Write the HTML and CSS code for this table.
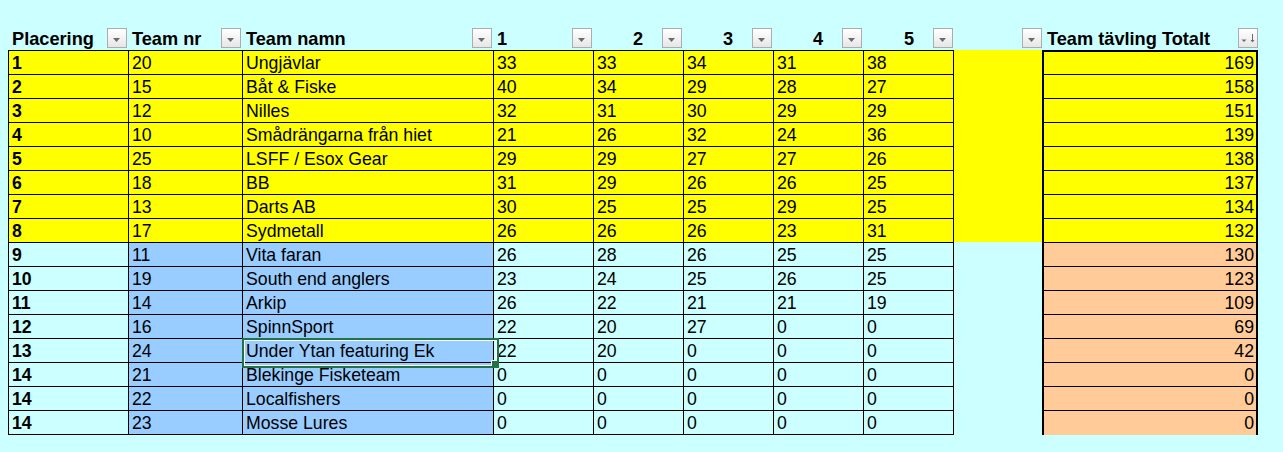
FILE: index.html
```html
<!DOCTYPE html>
<html lang="sv">
<head>
<meta charset="utf-8">
<title>Team tävling</title>
<link rel="stylesheet" href="styles.css">
</head>
<body>
<div class="sheet">
  <div class="row hdr">
    <div class="h"><span>Placering</span><span class="fb"><svg width="18" height="18"><path d="M5 9h7l-3.5 4z"/></svg></span></div>
    <div class="h"><span>Team nr</span><span class="fb"><svg width="18" height="18"><path d="M5 9h7l-3.5 4z"/></svg></span></div>
    <div class="h"><span>Team namn</span><span class="fb"><svg width="18" height="18"><path d="M5 9h7l-3.5 4z"/></svg></span></div>
    <div class="h"><span>1</span><span class="fb"><svg width="18" height="18"><path d="M5 9h7l-3.5 4z"/></svg></span></div>
    <div class="h hn"><span>2</span><span class="fb"><svg width="18" height="18"><path d="M5 9h7l-3.5 4z"/></svg></span></div>
    <div class="h hn"><span>3</span><span class="fb"><svg width="18" height="18"><path d="M5 9h7l-3.5 4z"/></svg></span></div>
    <div class="h hn"><span>4</span><span class="fb"><svg width="18" height="18"><path d="M5 9h7l-3.5 4z"/></svg></span></div>
    <div class="h hn h8"><span>5</span><span class="fb"><svg width="18" height="18"><path d="M5 9h7l-3.5 4z"/></svg></span></div>
    <div class="h hg"><span class="fb"><svg width="18" height="18"><path d="M5 9h7l-3.5 4z"/></svg></span></div>
    <div class="h ht"><span>Team tävling Totalt</span><span class="fb"><svg width="18" height="18"><path d="M2.5 10.5h5l-2.5 2.5z"/><rect x="13" y="5" width="1" height="7"/><path d="M11.5 11h4l-2 2.5z"/></svg></span></div>
  </div>

  <div class="row y first"><div class="c pl">1</div><div class="c">20</div><div class="c">Ungjävlar</div><div class="c">33</div><div class="c">33</div><div class="c">34</div><div class="c">31</div><div class="c c8">38</div><div class="gap"></div><div class="tot">169</div></div>
  <div class="row y"><div class="c pl">2</div><div class="c">15</div><div class="c">Båt &amp; Fiske</div><div class="c">40</div><div class="c">34</div><div class="c">29</div><div class="c">28</div><div class="c c8">27</div><div class="gap"></div><div class="tot">158</div></div>
  <div class="row y"><div class="c pl">3</div><div class="c">12</div><div class="c">Nilles</div><div class="c">32</div><div class="c">31</div><div class="c">30</div><div class="c">29</div><div class="c c8">29</div><div class="gap"></div><div class="tot">151</div></div>
  <div class="row y"><div class="c pl">4</div><div class="c">10</div><div class="c">Smådrängarna från hiet</div><div class="c">21</div><div class="c">26</div><div class="c">32</div><div class="c">24</div><div class="c c8">36</div><div class="gap"></div><div class="tot">139</div></div>
  <div class="row y"><div class="c pl">5</div><div class="c">25</div><div class="c">LSFF / Esox Gear</div><div class="c">29</div><div class="c">29</div><div class="c">27</div><div class="c">27</div><div class="c c8">26</div><div class="gap"></div><div class="tot">138</div></div>
  <div class="row y"><div class="c pl">6</div><div class="c">18</div><div class="c">BB</div><div class="c">31</div><div class="c">29</div><div class="c">26</div><div class="c">26</div><div class="c c8">25</div><div class="gap"></div><div class="tot">137</div></div>
  <div class="row y"><div class="c pl">7</div><div class="c">13</div><div class="c">Darts AB</div><div class="c">30</div><div class="c">25</div><div class="c">25</div><div class="c">29</div><div class="c c8">25</div><div class="gap"></div><div class="tot">134</div></div>
  <div class="row y"><div class="c pl">8</div><div class="c">17</div><div class="c">Sydmetall</div><div class="c">26</div><div class="c">26</div><div class="c">26</div><div class="c">23</div><div class="c c8">31</div><div class="gap"></div><div class="tot">132</div></div>

  <div class="row"><div class="c pl">9</div><div class="c b">11</div><div class="c b">Vita faran</div><div class="c">26</div><div class="c">28</div><div class="c">26</div><div class="c">25</div><div class="c c8">25</div><div class="gap"></div><div class="tot p">130</div></div>
  <div class="row"><div class="c pl">10</div><div class="c b">19</div><div class="c b">South end anglers</div><div class="c">23</div><div class="c">24</div><div class="c">25</div><div class="c">26</div><div class="c c8">25</div><div class="gap"></div><div class="tot p">123</div></div>
  <div class="row"><div class="c pl">11</div><div class="c b">14</div><div class="c b">Arkip</div><div class="c">26</div><div class="c">22</div><div class="c">21</div><div class="c">21</div><div class="c c8">19</div><div class="gap"></div><div class="tot p">109</div></div>
  <div class="row"><div class="c pl">12</div><div class="c b">16</div><div class="c b">SpinnSport</div><div class="c">22</div><div class="c">20</div><div class="c">27</div><div class="c">0</div><div class="c c8">0</div><div class="gap"></div><div class="tot p">69</div></div>
  <div class="row"><div class="c pl">13</div><div class="c b">24</div><div class="c b sel">Under Ytan featuring Ek<span class="handle"></span></div><div class="c">22</div><div class="c">20</div><div class="c">0</div><div class="c">0</div><div class="c c8">0</div><div class="gap"></div><div class="tot p">42</div></div>
  <div class="row"><div class="c pl">14</div><div class="c b">21</div><div class="c b">Blekinge Fisketeam</div><div class="c">0</div><div class="c">0</div><div class="c">0</div><div class="c">0</div><div class="c c8">0</div><div class="gap"></div><div class="tot p">0</div></div>
  <div class="row"><div class="c pl">14</div><div class="c b">22</div><div class="c b">Localfishers</div><div class="c">0</div><div class="c">0</div><div class="c">0</div><div class="c">0</div><div class="c c8">0</div><div class="gap"></div><div class="tot p">0</div></div>
  <div class="row last"><div class="c pl">14</div><div class="c b">23</div><div class="c b">Mosse Lures</div><div class="c">0</div><div class="c">0</div><div class="c">0</div><div class="c">0</div><div class="c c8">0</div><div class="gap"></div><div class="tot p">0</div></div>
</div>
</body>
</html>
```

FILE: styles.css
```css
* { box-sizing: border-box; }

html, body {
  margin: 0;
  background: #ccffff;
}

body {
  padding: 26px 0 0 8px;
  font-family: "Liberation Sans", Arial, sans-serif;
  font-size: 17.7px;
  color: #000;
}

.sheet {
  display: flex;
  flex-direction: column;
  width: 1250px;
}

.row {
  display: grid;
  grid-template-columns: 120px 114px 251px 100px 90px 90px 90px 91px 88px 216px;
  height: 24px;
}

.row.last { height: 25px; }

.y { background: #ffff00; }

/* header */
.h {
  display: flex;
  align-items: center;
  justify-content: space-between;
  border-left: 1px solid transparent;
  padding: 0 1px 0 3px;
  line-height: 24px;
  font-size: 18.2px;
  font-weight: bold;
  white-space: nowrap;
}

.h > span:first-child:not(.fb) { position: relative; top: 1px; }

.hn { justify-content: flex-end; }
.hn span:first-child { margin-right: 19px; }
.hg { justify-content: flex-end; padding-right: 0; border-left: 0; }
.ht { border-left: 2px solid transparent; padding-right: 0; }
.h8 { border-right: 1px solid transparent; padding-right: 0; }

.fb {
  flex: none;
  width: 20px;
  height: 20px;
  border: 1px solid #acacac;
  background: linear-gradient(#ffffff, #f3f3f3 50%, #e6e6e6);
  display: flex;
}

.fb svg { display: block; fill: #6b6b6b; }

/* data cells */
.c {
  border-left: 1px solid #000;
  border-top: 1px solid #000;
  padding: 2px 3px 0;
  line-height: 21px;
  white-space: nowrap;
  overflow: hidden;
}

.c8 { border-right: 1px solid #000; }

.last .c { border-bottom: 1px solid #000; }

.pl { font-weight: bold; }

.b { background: #99ccff; }

.tot {
  border-left: 2px solid #000;
  border-right: 2px solid #000;
  border-top: 1px solid #000;
  padding: 2px 2px 0 0;
  text-align: right;
  line-height: 21px;
}

.first .tot { border-top: 2px solid #000; padding-top: 1px; }

.p { background: #ffcc99; }

/* active cell selection */
.sel {
  position: relative;
  overflow: visible;
}

.sel::after {
  content: "";
  position: absolute;
  left: -1px;
  top: -1px;
  width: 253px;
  height: 26px;
  border: 2px solid #217346;
  box-shadow: inset 0 0 0 1px #ffffff;
  pointer-events: none;
}

.handle {
  position: absolute;
  left: 248px;
  top: 21px;
  width: 6px;
  height: 6px;
  background: #217346;
  border-left: 1px solid #ffffff;
  border-top: 1px solid #ffffff;
  z-index: 2;
}
```
